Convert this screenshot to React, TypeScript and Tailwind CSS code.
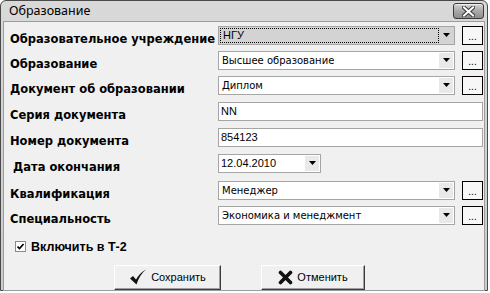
import React from "react";

const labelCls = "font-['DejaVu_Sans',sans-serif] font-bold text-[11.5px] leading-[14px] text-black whitespace-nowrap";
const tahoma = "font-['DejaVu_Sans',sans-serif] text-[10px] text-black";
const msSans = "font-['Liberation_Sans',Arial,sans-serif] text-[11px] text-black";

function Arrow({ gray }: { gray?: boolean }) {
  return (
    <div className={`flex h-[15px] w-[14px] items-center justify-center ${gray ? "bg-[#d3d3d3]" : "bg-[#e9e9e9]"}`}>
      <svg width="7" height="4" viewBox="0 0 7 4">
        <path d="M0 0h7L3.5 4z" fill="#000" />
      </svg>
    </div>
  );
}

function DotsButton() {
  return (
    <div className="ml-[7px] flex h-[19px] w-[21px] items-end justify-center border border-black bg-[#f7f7f7] pb-[3px]">
      <span className="font-['Liberation_Sans',sans-serif] text-[10px] leading-[8px] text-black">...</span>
    </div>
  );
}

function Combo({ value, focused, mono }: { value: string; focused?: boolean; mono?: boolean }) {
  return (
    <div className="flex items-center">
      <div
        className={`flex h-[19px] w-[237px] items-center border border-[#a5a5a5] p-[1px] ${focused ? "bg-[#d3d3d3]" : "bg-white"}`}
      >
        <div
          className={`flex h-full flex-1 items-center pl-[2px] ${focused ? "border border-dotted border-black" : ""} ${
            mono ? msSans : tahoma
          }`}
        >
          {value}
        </div>
        <Arrow gray={focused} />
      </div>
      <DotsButton />
    </div>
  );
}

function TextInput({ value }: { value: string }) {
  return (
    <div className={`flex h-[19px] w-[265px] items-center border border-[#a5a5a5] bg-white pl-[2px] ${msSans}`}>
      {value}
    </div>
  );
}

function DateInput({ value }: { value: string }) {
  return (
    <div className="flex h-[19px] w-[103px] items-center border border-[#a5a5a5] bg-white p-[1px]">
      <div className={`flex-1 pl-[1px] ${msSans}`}>{value}</div>
      <Arrow />
    </div>
  );
}

function Row({ label, mt, indent, children }: { label: string; mt: string; indent?: boolean; children: React.ReactNode }) {
  return (
    <div className={`flex items-start ${mt}`}>
      <div className={`w-[208px] shrink-0 pt-[6px] ${indent ? "pl-[3px]" : ""} ${labelCls}`}>{label}</div>
      {children}
    </div>
  );
}

function CloseButton() {
  return (
    <div className="flex h-[16px] w-[31px] items-center justify-center rounded-[3px] border border-[#3a3a3a] bg-gradient-to-b from-[#d6d6d6] via-[#a9a9a9] to-[#8e8e8e] shadow-[inset_0_1px_0_#eeeeee]">
      <svg width="13" height="11" viewBox="0 0 13 11">
        <path d="M2 1.5l9 8M11 1.5l-9 8" stroke="#3a3a3a" strokeWidth="4" strokeLinecap="square" />
        <path d="M2 1.5l9 8M11 1.5l-9 8" stroke="#ffffff" strokeWidth="2" strokeLinecap="square" />
      </svg>
    </div>
  );
}

function WinButton({ icon, text, width }: { icon: React.ReactNode; text: string; width: string }) {
  return (
    <div
      className={`flex h-[25px] ${width} items-center justify-center gap-[4px] border-t border-l border-white border-b-[#3c3c3c] border-r-[#3c3c3c] border-b border-r bg-[#f0f0f0] shadow-[inset_-1px_-1px_0_#a0a0a0]`}
    >
      {icon}
      <span className={`${msSans} text-[11.5px]`}>{text}</span>
    </div>
  );
}

export default function App() {
  return (
    <div className="h-[293px] w-[490px] bg-white">
      <div className="flex h-[291px] w-[488px] flex-col rounded-t-[6px] border border-[#4a4a4a] bg-gradient-to-b from-[#d9d9d9] to-[#cbcbcb] px-[2px] pb-[1px]">
        {/* Title bar */}
        <div className="flex h-[25px] items-center justify-between pl-[6px] pr-[1px] pt-[1px]">
          <span className="font-['Noto_Sans',sans-serif] text-[12.5px] text-black">Образование</span>
          <CloseButton />
        </div>

        {/* Client area */}
        <div className="flex flex-1 flex-col border border-[#9c9c9c] bg-[#f0f0f0] pl-[6px] pt-[4px]">
          <Row label="Образовательное учреждение" mt="mt-0">
            <Combo value="НГУ" focused mono />
          </Row>
          <Row label="Образование" mt="mt-[5px]">
            <Combo value="Высшее образование" />
          </Row>
          <Row label="Документ об образовании" mt="mt-[5px]">
            <Combo value="Диплом" />
          </Row>
          <Row label="Серия документа" mt="mt-[6px]">
            <TextInput value="NN" />
          </Row>
          <Row label="Номер документа" mt="mt-[6px]">
            <TextInput value="854123" />
          </Row>
          <Row label="Дата окончания" mt="mt-[6px]" indent>
            <DateInput value="12.04.2010" />
          </Row>
          <Row label="Квалификация" mt="mt-[7px]">
            <Combo value="Менеджер" />
          </Row>
          <Row label="Специальность" mt="mt-[5px]">
            <Combo value="Экономика и менеджмент" />
          </Row>

          {/* Checkbox */}
          <div className="mt-[14px] flex items-center gap-[5px] pl-[5px]">
            <div className="flex h-[11px] w-[11px] items-center justify-center border border-[#8a8a8a] bg-white">
              <svg width="7" height="7" viewBox="0 0 7 7">
                <path d="M0.5 3.5l2 2 4-4.5" stroke="#000" strokeWidth="1.6" fill="none" />
              </svg>
            </div>
            <span className="font-['Liberation_Sans',Arial,sans-serif] text-[12.5px] font-bold leading-[14px] text-black">Включить в Т-2</span>
          </div>

          {/* Buttons */}
          <div className="mt-[11px] flex gap-[40px] pl-[104px]">
            <WinButton
              width="w-[107px]"
              text="Сохранить"
              icon={
                <svg width="18" height="16" viewBox="0 0 18 16">
                  <path d="M1 9.5l3-2.5 3 3.5C9.5 6 12.5 3 17 0.5 12.5 4.5 9.5 9 7.5 15.5z" fill="#111" />
                </svg>
              }
            />
            <WinButton
              width="w-[104px]"
              text="Отменить"
              icon={
                <svg width="15" height="15" viewBox="0 0 15 15">
                  <path d="M2.5 2.5l10 10M12.5 2.5l-10 10" stroke="#111" strokeWidth="3.6" strokeLinecap="round" />
                </svg>
              }
            />
          </div>
        </div>
      </div>
    </div>
  );
}
